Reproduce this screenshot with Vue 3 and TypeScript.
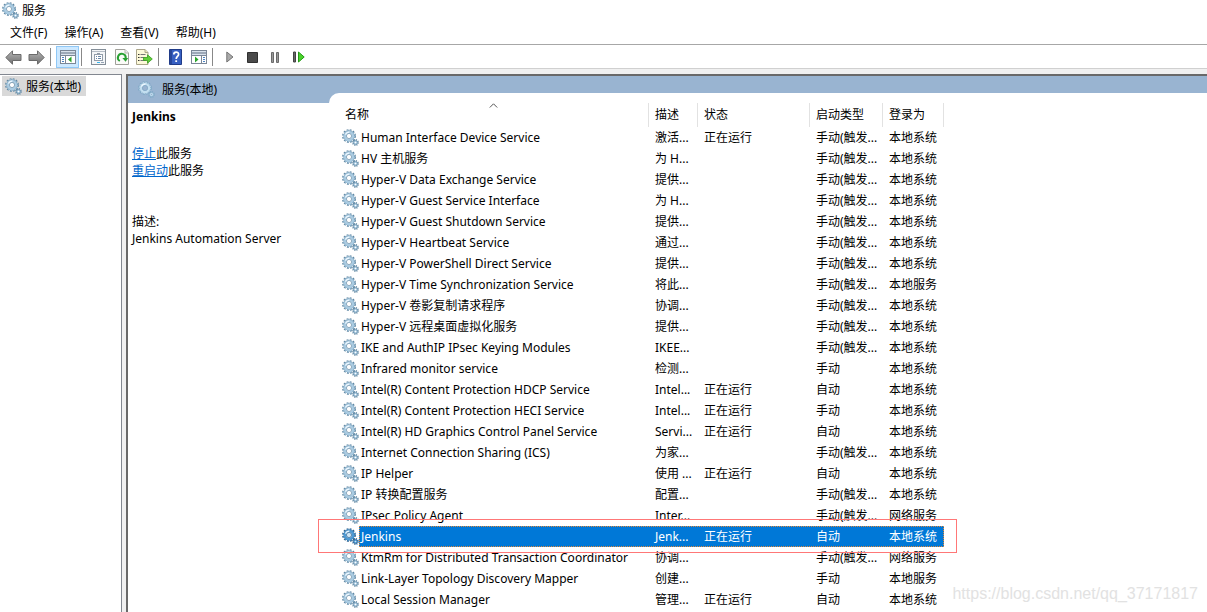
<script setup lang="ts">
import { h } from 'vue'

interface Service {
  name: string
  desc: string
  running: boolean
  start: string
  logon: string
}

const TRIG = '手动(触发...'
const MANUAL = '手动'
const AUTO = '自动'
const SYS = '本地系统'
const LOCAL = '本地服务'
const NET = '网络服务'

const svc = (name: string, desc: string, running: boolean, start: string, logon: string): Service => ({
  name, desc, running, start, logon,
})

const services: Service[] = [
  svc('Human Interface Device Service', '激活...', true, TRIG, SYS),
  svc('HV 主机服务', '为 H...', false, TRIG, SYS),
  svc('Hyper-V Data Exchange Service', '提供...', false, TRIG, SYS),
  svc('Hyper-V Guest Service Interface', '为 H...', false, TRIG, SYS),
  svc('Hyper-V Guest Shutdown Service', '提供...', false, TRIG, SYS),
  svc('Hyper-V Heartbeat Service', '通过...', false, TRIG, SYS),
  svc('Hyper-V PowerShell Direct Service', '提供...', false, TRIG, SYS),
  svc('Hyper-V Time Synchronization Service', '将此...', false, TRIG, LOCAL),
  svc('Hyper-V 卷影复制请求程序', '协调...', false, TRIG, SYS),
  svc('Hyper-V 远程桌面虚拟化服务', '提供...', false, TRIG, SYS),
  svc('IKE and AuthIP IPsec Keying Modules', 'IKEE...', false, TRIG, SYS),
  svc('Infrared monitor service', '检测...', false, MANUAL, SYS),
  svc('Intel(R) Content Protection HDCP Service', 'Intel...', true, AUTO, SYS),
  svc('Intel(R) Content Protection HECI Service', 'Intel...', true, MANUAL, SYS),
  svc('Intel(R) HD Graphics Control Panel Service', 'Servi...', true, AUTO, SYS),
  svc('Internet Connection Sharing (ICS)', '为家...', false, TRIG, SYS),
  svc('IP Helper', '使用 ...', true, AUTO, SYS),
  svc('IP 转换配置服务', '配置...', false, TRIG, SYS),
  svc('IPsec Policy Agent', 'Inter...', false, TRIG, NET),
  svc('Jenkins', 'Jenk...', true, AUTO, SYS),
  svc('KtmRm for Distributed Transaction Coordinator', '协调...', false, TRIG, NET),
  svc('Link-Layer Topology Discovery Mapper', '创建...', false, MANUAL, LOCAL),
  svc('Local Session Manager', '管理...', true, AUTO, SYS),
]
const selected = 'Jenkins'
const menus = ['文件(F)', '操作(A)', '查看(V)', '帮助(H)']

const GearIcon = (props: { active?: boolean; pale?: boolean }) => {
  const edge = props.active ? '#2a5f8c' : props.pale ? '#7fa9c6' : '#5f87a3'
  const body = props.active ? '#4d9bd6' : props.pale ? '#c3dff0' : '#a9cbe2'
  const hole = props.active ? '#cfe6f6' : props.pale ? '#9ab4d1' : '#ffffff'
  const ring = (cx: number, cy: number, r: number, stroke: string, w: number, dash?: string) =>
    h('circle', { cx, cy, r, fill: 'none', stroke, 'stroke-width': w, 'stroke-dasharray': dash })
  return h('svg', { width: 17, height: 17, viewBox: '0 0 17 17', 'aria-hidden': 'true' }, [
    ring(7, 7, 5.9, edge, 2, '1.8 1.29'),
    ring(7, 7, 4.6, edge, 1.6),
    ring(7, 7, 4, body, 2.4),
    ring(7, 7, 5.6, body, 1, '1.2 1.73'),
    h('circle', { cx: 7, cy: 7, r: 2.6, fill: hole, stroke: edge, 'stroke-width': 0.7 }),
    h('path', { d: 'M3.500 5.600A3.900 3.900 0 0 1 7.400 3.100', fill: 'none', stroke: '#eef8ff', 'stroke-width': 1.1 }),
    ring(13.5, 13.5, 2.7, edge, 1.5, '1.1 1.02'),
    h('circle', { cx: 13.5, cy: 13.5, r: 2.1, fill: body, stroke: edge, 'stroke-width': 0.7 }),
    h('circle', { cx: 13.5, cy: 13.5, r: 0.8, fill: hole }),
  ])
}
GearIcon.props = { active: Boolean, pale: Boolean }
</script>

<template>
  <div class="window">
    <header class="titlebar"><GearIcon /><span>服务</span></header>
    <nav class="menubar">
      <button v-for="m in menus" :key="m" type="button">{{ m }}</button>
    </nav>

    <div class="toolbar" role="toolbar">
      <button type="button" aria-label="后退">
        <svg width="17" height="15" viewBox="0 0 17 15"><defs><linearGradient id="arrow" x1="0" y1="0" x2="0" y2="1"><stop offset="0" stop-color="#b5b5b5" /><stop offset="1" stop-color="#707070" /></linearGradient></defs><path d="M.8 7.500 7.500.8V4.500H16v6H7.500v3.700z" fill="url(#arrow)" stroke="#6a6a6a" /></svg>
      </button>
      <button type="button" aria-label="前进">
        <svg width="17" height="15" viewBox="0 0 17 15"><path d="M16.200 7.500 9.500.8V4.500H1v6h8.500v3.700z" fill="url(#arrow)" stroke="#6a6a6a" /></svg>
      </button>
      <i class="sep"></i>
      <button type="button" class="pressed" aria-label="显示/隐藏控制台树">
        <svg width="16" height="14" viewBox="0 0 16 14" shape-rendering="crispEdges"><path d="M0 0h16v14H0z" fill="#7b8797" /><path d="M1 1h14v1H1zM1 4h14v1H1z" fill="#d9e2ec" /><path d="M1 2h14v2H1z" fill="#9da9b8" /><path d="M1 6h4v7H1zM6 6h9v7H6z" fill="#fff" /><path d="M2 7h2v1H2zM2 9h2v1H2zM2 11h2v1H2z" fill="#4b83c4" /><path d="M11.500 6.500v6L8 9.500z" fill="#28a428" shape-rendering="auto" /></svg>
      </button>
      <i class="sep"></i>
      <button type="button" aria-label="属性">
        <svg width="15" height="16" viewBox="0 0 15 16" shape-rendering="crispEdges"><path d="M.5.500h14v15H.5z" fill="#f4f6f8" stroke="#848e98" /><path d="M1 2h13v1H1z" fill="#b5bdc6" /><path d="M3 5h3v-1h3v1h3v7H3z" fill="#929daa" /><path d="M4 6h7v5H4z" fill="#fff" /><path d="M5 7h1v1H5zM5 9h1v1H5zM7 7h3v1H7zM7 9h3v1H7z" fill="#6987a8" /><path d="M6 13h3v1H6z" fill="#38b6ee" /><path d="M10 13h3v1h-3z" fill="#94a2b2" /></svg>
      </button>
      <button type="button" aria-label="刷新">
        <svg width="14" height="16" viewBox="0 0 14 16"><path d="M.5.500h9.500l3.500 3.500v11.500H.5z" fill="#fbfbf8" stroke="#a0a09a" /><path d="M10 .5V4h3.500" fill="#eee" stroke="#b5b5ae" /><path d="M4.800 12A3.900 3.900 0 1 1 10.700 9" fill="none" stroke="#28a032" stroke-width="2" /><path d="M7.400 9h5.800l-2.600 3.800z" fill="#28a032" /></svg>
      </button>
      <button type="button" aria-label="导出列表">
        <svg width="17" height="16" viewBox="0 0 17 16"><path d="M.5.500h8.500l3 3v12H.5z" fill="#fdf9d9" stroke="#aaa58a" /><path d="M9 .5v3h3" fill="#eee8bd" stroke="#aaa58a" /><path d="M2 5h1.500v1H2zM2 8h1.500v1H2zM2 11h1.500v1H2z" fill="#333" /><path d="M4.500 5h5v1h-5zM4.500 8h4v1h-4zM4.500 11h5v1h-5z" fill="#777" /><path d="M7.500 8.500h4V5.800L16.300 10l-4.800 4.200v-2.700h-4z" fill="#62cf39" stroke="#399d22" stroke-width=".8" /></svg>
      </button>
      <i class="sep"></i>
      <button type="button" aria-label="帮助">
        <svg width="13" height="16" viewBox="0 0 13 16"><path d="M.5.500h12v15H.5z" fill="#365fc2" stroke="#203b88" /><path d="M1 1h2v14H1z" fill="#27469a" /><path d="M4.800 5.400C4.800 2.300 9.600 2.300 9.600 5.200 9.600 7.400 7.200 7.400 7.200 10" fill="none" stroke="#fff" stroke-width="1.700" /><path d="M6.300 11.300h1.800V13H6.300z" fill="#fff" /></svg>
      </button>
      <button type="button" aria-label="显示/隐藏操作窗格">
        <svg width="16" height="14" viewBox="0 0 16 14" shape-rendering="crispEdges"><path d="M0 0h16v14H0z" fill="#7b8797" /><path d="M1 1h14v1H1zM1 4h14v1H1z" fill="#d9e2ec" /><path d="M1 2h14v2H1z" fill="#9da9b8" /><path d="M1 6h9v7H1zM11 6h4v7h-4z" fill="#fff" /><path d="M12 7h2v1h-2zM12 9h2v1h-2zM12 11h2v1h-2z" fill="#4b83c4" /><path d="M4 6.500v6l3.500-3z" fill="#28a428" shape-rendering="auto" /></svg>
      </button>
      <i class="sep"></i>
      <button type="button" aria-label="启动服务">
        <svg width="8" height="12" viewBox="0 0 8 12"><path d="M.8 1v10L7 6z" fill="#aaa" stroke="#747474" /></svg>
      </button>
      <button type="button" aria-label="停止服务">
        <svg width="11" height="11" viewBox="0 0 11 11"><path d="M.5.500h10v10H.5z" fill="#4a4a4a" stroke="#303030" stroke-linejoin="round" /></svg>
      </button>
      <button type="button" aria-label="暂停服务">
        <svg width="9" height="11" viewBox="0 0 9 11"><path d="M.5.500h2v10h-2zM5.500 .5h2v10h-2z" fill="#999" stroke="#6b6b6b" /></svg>
      </button>
      <button type="button" aria-label="重新启动服务">
        <svg width="12" height="12" viewBox="0 0 12 12"><path d="M.5 1h2v10h-2z" fill="#666" stroke="#444" /><path d="M5.500 1v10l5.700-5z" fill="#4bd32c" stroke="#249b16" /></svg>
      </button>
    </div>

    <main class="workspace">
      <aside class="tree">
        <button type="button" class="node"><GearIcon /><span>服务(本地)</span></button>
      </aside>

      <section class="pane">
        <div class="band"><GearIcon pale /><span>服务(本地)</span></div>
        <div class="content">
          <div class="detail">
            <h1>Jenkins</h1>
            <p><a href="#stop">停止</a>此服务</p>
            <p><a href="#restart">重启动</a>此服务</p>
            <p class="about">描述:</p>
            <p>Jenkins Automation Server</p>
          </div>
          <div class="card">
            <table>
              <colgroup><col class="c-name" /><col class="c-desc" /><col class="c-state" /><col class="c-start" /><col class="c-logon" /></colgroup>
              <thead>
                <tr>
                  <th scope="col">名称<svg class="sort" width="9" height="5" viewBox="0 0 9 5" aria-hidden="true"><path d="M.8 4.500l3.700-3.700 3.700 3.700" fill="none" stroke="#555" /></svg></th>
                  <th scope="col">描述</th>
                  <th scope="col">状态</th>
                  <th scope="col">启动类型</th>
                  <th scope="col">登录为</th>
                </tr>
              </thead>
              <tbody>
                <tr v-for="s in services" :key="s.name" :class="{ selected: s.name === selected }">
                  <td class="name"><div><GearIcon :active="s.name === selected" /><span>{{ s.name }}</span></div></td>
                  <td>{{ s.desc }}</td>
                  <td>{{ s.running ? '正在运行' : '' }}</td>
                  <td>{{ s.start }}</td>
                  <td>{{ s.logon }}</td>
                </tr>
              </tbody>
            </table>
          </div>
        </div>
      </section>
    </main>
    <div class="watermark">https://blog.csdn.net/qq_37171817</div>
  </div>
</template>

<style>
html,
body {
  margin: 0;
  overflow: hidden;
}
</style>

<style scoped>
.window {
  position: relative;
  display: flex;
  flex-direction: column;
  height: 100vh;
  overflow: hidden;
  background: #fff;
  color: #000;
  font: 12px/17px "Noto Sans", "Noto Sans CJK SC", sans-serif;
}
button {
  margin: 0;
  border: 0;
  background: none;
  color: inherit;
  font: inherit;
}
svg {
  display: block;
  flex: none;
}
.titlebar {
  display: flex;
  align-items: center;
  gap: 3px;
  height: 20px;
  padding-left: 2px;
}
.menubar {
  display: flex;
  gap: 1px;
  height: 24px;
  padding-left: 2px;
  border-bottom: 1px solid #a7a7a7;
}
.menubar button {
  padding: 0 8px;
}
.toolbar {
  display: flex;
  align-items: center;
  height: 22px;
  padding: 1px 0 0 2px;
  border-bottom: 1px solid #d0d0d0;
}
.toolbar button {
  display: flex;
  align-items: center;
  justify-content: center;
  width: 23px;
  height: 22px;
  padding: 0;
}
.toolbar .pressed {
  border: 1px solid #90c8f6;
  background: #cce8ff;
}
.sep {
  width: 1px;
  height: 18px;
  margin: 0 5px 0 2px;
  background: #888;
}
.workspace {
  display: flex;
  flex: 1;
  gap: 4px;
  min-height: 0;
  padding-top: 5px;
  background: #f0f0f0;
}
.tree {
  width: 119px;
  padding: 1px 0 0 2px;
  border: solid #828790;
  border-width: 1px 1px 0 0;
  background: #fff;
}
.node {
  display: flex;
  align-items: center;
  gap: 4px;
  height: 20px;
  padding: 0 5px 0 3px;
  background: #d9d9d9;
  white-space: nowrap;
}
.pane {
  display: flex;
  flex: 1;
  flex-direction: column;
  min-width: 0;
  border: solid #696969;
  border-width: 2px 0 0 2px;
}
.band {
  display: flex;
  flex: none;
  align-items: center;
  gap: 7px;
  height: 27px;
  padding-left: 10px;
  background: #99b4d1;
}
.content {
  display: flex;
  flex: 1;
  min-height: 0;
  background: #fff;
}
.detail {
  flex: none;
  width: 197px;
  padding: 5px 0 0 4px;
}
.detail h1 {
  margin: 0 0 20px;
  font-size: 12px;
  line-height: 17px;
}
.detail p {
  margin: 0;
}
.detail .about {
  margin-top: 34px;
}
.detail a {
  color: #0066cc;
}
.card {
  flex: 1;
  min-width: 0;
  margin-top: -10px;
  padding: 10px 0 0 10px;
  border-top-left-radius: 10px;
  background: #fff;
}
table {
  width: 605px;
  border-collapse: separate;
  border-spacing: 0;
  table-layout: fixed;
}
.c-name {
  width: 310px;
}
.c-desc {
  width: 49px;
}
.c-state {
  width: 112px;
}
.c-start {
  width: 73px;
}
.c-logon {
  width: 61px;
}
th {
  position: relative;
  height: 22px;
  padding: 0 0 2px 6px;
  border-right: 1px solid #e2e2e2;
  font-weight: 400;
  text-align: left;
}
.sort {
  position: absolute;
  top: 0;
  right: 0;
  left: 0;
  margin: 0 auto;
}
td {
  height: 21px;
  padding: 0 0 0 6px;
  line-height: 21px;
  white-space: nowrap;
}
td.name {
  padding-left: 3px;
}
.name div {
  display: flex;
  align-items: center;
}
.name span {
  flex: 1;
  padding-left: 2px;
}
.selected {
  position: relative;
  color: #fff;
}
.selected td:not(.name),
.selected .name span {
  background: #0078d7;
}
.selected .name::before {
  position: absolute;
  inset: 0 0 0 20px;
  border: 1px dotted #e08a3c;
  content: "";
}
.selected .name::after {
  position: absolute;
  inset: -7px -13px -6px -21px;
  border: 1px solid #f77;
  content: "";
}
.watermark {
  position: absolute;
  right: 9px;
  bottom: 8px;
  color: #e2e2e2;
  font: 16px/20px "Liberation Sans", Arial, sans-serif;
}
</style>
